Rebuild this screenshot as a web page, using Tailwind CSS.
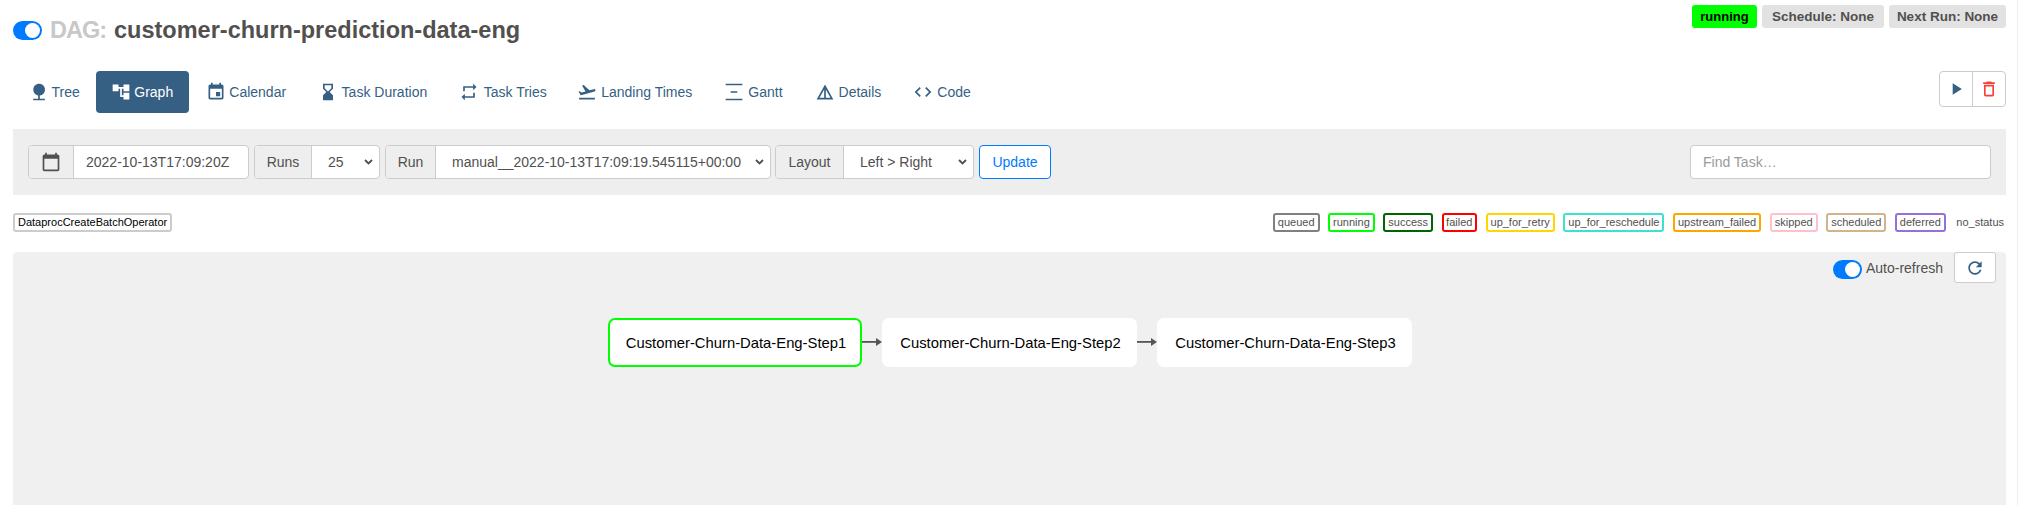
<!DOCTYPE html>
<html lang="en">

<head>
    <meta charset="UTF-8">
    <title>DAG: customer-churn-prediction-data-eng</title>
    <script src="https://cdn.jsdelivr.net/npm/@tailwindcss/browser@4"></script>
</head>

<body class="bg-white font-['Liberation_Sans',sans-serif] text-[#51504f] overflow-hidden">
    <div class="h-[505px] w-[2018px] border-r border-[#eeeeee] pl-[13px] pr-[11px]">
        <!-- header -->
        <div class="relative h-[58px]">
            <h4 class="flex items-center pt-[15px] text-[23.500px] leading-[30px] font-bold">
                <span class="relative mr-[8px] h-[19px] w-[29px] rounded-full bg-[#007bff]">
                    <span class="absolute right-[2px] top-[2px] h-[15px] w-[15px] rounded-full bg-white"></span>
                </span>
                <span class="mr-[8px] tracking-[-1px] text-[#c8c8c8]">DAG:</span>
                <span>customer-churn-prediction-data-eng</span>
            </h4>
            <div class="absolute right-0 top-[5px] flex gap-[5px] text-center text-[13.5px] font-bold leading-[23px]">
                <span class="w-[65px] rounded-[3px] bg-[#00ff00] text-[13px] text-black">running</span>
                <span class="w-[122px] rounded-[3px] bg-[#e2e2e2]">Schedule: None</span>
                <span class="w-[117px] rounded-[3px] bg-[#e2e2e2]">Next Run: None</span>
            </div>
        </div>

        <!-- tabs -->
        <div class="flex h-[71px] items-start justify-between pt-[13px] text-[14px] text-[#365f84]">
            <nav class="flex">
                <a class="flex h-[42px] items-center gap-[3px] pl-[15.500px] pr-[16.500px]">
                    <svg class="h-[20px] w-[20px]" viewBox="0 0 24 24" fill="#365f84"><path d="M13 16.120c3.470-.410 6.170-3.360 6.170-6.950 0-3.870-3.130-7-7-7s-7 3.130-7 7c0 3.470 2.520 6.340 5.830 6.890V20H5v2h14v-2h-6v-3.880z"/></svg>Tree</a>
                <a class="flex h-[42px] w-[93px] items-center gap-[3px] rounded-[4px] bg-[#365f84] pl-[15px] text-white">
                    <svg class="h-[20px] w-[20px]" viewBox="0 0 24 24" fill="white"><path d="M22 11V3h-7v3H9V3H2v8h7V8h2v10h4v3h7v-8h-7v3h-2V8h2v3z"/></svg>Graph</a>
                <a class="flex h-[42px] items-center gap-[3.500px] pl-[16.500px] pr-[16.500px]">
                    <svg class="h-[20px] w-[20px]" viewBox="0 0 24 24" fill="#365f84"><path d="M17 12h-5v5h5v-5zM16 1v2H8V1H6v2H5c-1.110 0-1.990.9-1.990 2L3 19c0 1.100.89 2 2 2h14c1.100 0 2-.9 2-2V5c0-1.100-.9-2-2-2h-1V1h-2zm3 18H5V8h14v11z"/></svg>Calendar</a>
                <a class="flex h-[42px] items-center gap-[3.500px] px-[15.500px]">
                    <svg class="h-[20px] w-[20px]" viewBox="0 0 24 24" fill="#365f84"><path fill-rule="evenodd" d="M18 22l-.01-6L14 12l3.990-4.010L18 2H6v6l4 4-4 3.990V22h12zM8 7.500V4h8v3.500l-4 4-4-4z"/></svg>Task Duration</a>
                <a class="flex h-[42px] items-center gap-[5px] pl-[16px] pr-[14.500px]">
                    <svg class="h-[20px] w-[20px]" viewBox="0 0 24 24" fill="#365f84"><path d="M7 7h10v3l4-4-4-4v3H5v6h2V7zm10 10H7v-3l-4 4 4 4v-3h12v-6h-2v4z"/></svg>Task Tries</a>
                <a class="flex h-[42px] items-center gap-[4px] px-[16px]">
                    <svg class="h-[20px] w-[20px]" viewBox="0 0 24 24" fill="#365f84"><path d="M2.500 19h19v2h-19v-2zm19.570-9.360c-.21-.8-1.040-1.280-1.840-1.060L14.920 10l-6.900-6.430-1.930.51 4.140 7.170-4.970 1.330-1.970-1.540-1.450.39 1.820 3.160.77 1.330 1.600-.43 5.310-1.420 4.350-1.160L21 11.490c.81-.23 1.280-1.050 1.070-1.850z"/></svg>Landing Times</a>
                <a class="flex h-[42px] items-center gap-[4px] px-[16px]">
                    <svg class="h-[20px] w-[20px]" viewBox="0 0 24 24" fill="#365f84"><path d="M2 22h20v-2H2v2zM2 2v2h20V2H2zm6 9v2h8v-2H8z"/></svg>Gantt</a>
                <a class="flex h-[42px] items-center gap-[4px] px-[16px]">
                    <svg class="h-[20px] w-[20px]" viewBox="0 0 24 24" fill="#365f84"><path d="M12 3L2 21h20L12 3zm1 5.920L18.600 19H13V8.920zm-2 0V19H5.400L11 8.920z"/></svg>Details</a>
                <a class="flex h-[42px] items-center gap-[4px] px-[16px]">
                    <svg class="h-[20px] w-[20px]" viewBox="0 0 24 24" fill="#365f84"><path d="M9.400 16.600L4.800 12l4.600-4.600L8 6l-6 6 6 6 1.400-1.400zm5.200 0l4.600-4.600-4.600-4.600L16 6l6 6-6 6-1.400-1.400z"/></svg>Code</a>
            </nav>
            <div class="flex h-[36px] w-[67px] rounded-[4px] border border-[#cccccc]">
                <button class="flex flex-1 items-center justify-center border-r border-[#cccccc]">
                    <svg class="h-[20px] w-[20px]" viewBox="0 0 24 24" fill="#365f84"><path d="M8 5v14l11-7z"/></svg>
                </button>
                <button class="flex flex-1 items-center justify-center">
                    <svg class="h-[20px] w-[20px]" viewBox="0 0 24 24" fill="#f44336"><path d="M6 19c0 1.100.9 2 2 2h8c1.100 0 2-.9 2-2V7H6v12zM8 9h8v10H8V9zm7.500-5l-1-1h-5l-1 1H5v2h14V4z"/></svg>
                </button>
            </div>
        </div>

        <!-- filter bar -->
        <div class="flex h-[66px] items-center justify-between bg-[#eeeeee] px-[15px] text-[14px]">
            <div class="flex gap-[5px]">
                <div class="flex h-[34px] w-[221px] overflow-hidden rounded-[4px] border border-[#cccccc] bg-white">
                    <span class="flex w-[45px] items-center justify-center border-r border-[#cccccc] bg-[#eeeeee]">
                        <svg class="h-[20px] w-[20px]" viewBox="0 0 24 24" fill="#51504f"><path d="M20 3h-1V1h-2v2H7V1H5v2H4c-1.100 0-2 .9-2 2v16c0 1.100.9 2 2 2h16c1.100 0 2-.9 2-2V5c0-1.100-.9-2-2-2zm0 18H4V8h16v13z"/></svg>
                    </span>
                    <span class="flex flex-1 items-center pl-[12px]">2022-10-13T17:09:20Z</span>
                </div>
                <div class="flex h-[34px] w-[126px] overflow-hidden rounded-[4px] border border-[#cccccc] bg-white">
                    <span class="flex w-[57px] items-center justify-center border-r border-[#cccccc] bg-[#eeeeee]">Runs</span>
                    <span class="flex flex-1 items-center justify-between pl-[16px] pr-[6px]">25
                        <svg class="h-[6px] w-[9px]" viewBox="0 0 9 6" fill="none" stroke="#51504f" stroke-width="1.800"><path d="M1 1l3.500 3.500L8 1"/></svg></span>
                </div>
                <div class="flex h-[34px] w-[386px] overflow-hidden rounded-[4px] border border-[#cccccc] bg-white">
                    <span class="flex w-[50px] items-center justify-center border-r border-[#cccccc] bg-[#eeeeee]">Run</span>
                    <span class="flex flex-1 items-center justify-between pl-[16px] pr-[6px]">manual__2022-10-13T17:09:19.545115+00:00
                        <svg class="h-[6px] w-[9px]" viewBox="0 0 9 6" fill="none" stroke="#51504f" stroke-width="1.800"><path d="M1 1l3.500 3.500L8 1"/></svg></span>
                </div>
                <div class="-ml-[1px] flex h-[34px] w-[199px] overflow-hidden rounded-[4px] border border-[#cccccc] bg-white">
                    <span class="flex w-[68px] items-center justify-center border-r border-[#cccccc] bg-[#eeeeee]">Layout</span>
                    <span class="flex flex-1 items-center justify-between pl-[16px] pr-[6px]">Left &gt; Right
                        <svg class="h-[6px] w-[9px]" viewBox="0 0 9 6" fill="none" stroke="#51504f" stroke-width="1.800"><path d="M1 1l3.500 3.500L8 1"/></svg></span>
                </div>
                <button class="h-[34px] w-[72px] rounded-[4px] border border-[#007bff] bg-white text-[#007bff]">Update</button>
            </div>
            <div class="flex h-[34px] w-[301px] items-center rounded-[4px] border border-[#cccccc] bg-white pl-[12px] text-[#9a9a9a]">Find Task…</div>
        </div>

        <!-- legend -->
        <div class="flex h-[57px] items-start justify-between pt-[18px] text-[11px] leading-[15px]">
            <span class="rounded-[3px] border-2 border-[#cccccc] px-[3px] text-black">DataprocCreateBatchOperator</span>
            <div class="flex gap-[8.500px] pr-[2px]">
                <span class="rounded-[3px] border-2 border-[#808080] px-[3px]">queued</span>
                <span class="rounded-[3px] border-2 border-[#00ff00] px-[3px]">running</span>
                <span class="rounded-[3px] border-2 border-[#006400] px-[3px]">success</span>
                <span class="w-[35.500px] rounded-[3px] border-2 border-[#ff0000] text-center">failed</span>
                <span class="rounded-[3px] border-2 border-[#ffd700] px-[3px]">up_for_retry</span>
                <span class="rounded-[3px] border-2 border-[#40e0d0] px-[3px]">up_for_reschedule</span>
                <span class="rounded-[3px] border-2 border-[#ffa500] px-[3px]">upstream_failed</span>
                <span class="rounded-[3px] border-2 border-[#ffc0cb] px-[3px]">skipped</span>
                <span class="rounded-[3px] border-2 border-[#d2b48c] px-[3px]">scheduled</span>
                <span class="rounded-[3px] border-2 border-[#9370db] px-[3px]">deferred</span>
                <span class="py-[2px] pl-[2px]">no_status</span>
            </div>
        </div>

        <!-- graph -->
        <div class="relative h-[253px] rounded-t-[4px] bg-[#f0f0f0]">
            <div class="absolute right-[10px] top-0 flex items-start text-[14px]">
                <span class="relative mt-[8px] h-[19px] w-[29px] rounded-full bg-[#007bff]">
                    <span class="absolute right-[2px] top-[2px] h-[15px] w-[15px] rounded-full bg-white"></span>
                </span>
                <span class="ml-[4px] mr-[11px] mt-[7px] leading-[18px]">Auto-refresh</span>
                <button class="flex h-[31px] w-[42px] items-center justify-center rounded-[3px] border border-[#cccccc] bg-white">
                    <svg class="h-[20px] w-[20px]" viewBox="0 0 24 24" fill="#365f84"><path d="M17.650 6.350C16.200 4.900 14.210 4 12 4c-4.420 0-7.990 3.580-7.990 8s3.570 8 7.990 8c3.730 0 6.840-2.550 7.730-6h-2.080c-.82 2.330-3.040 4-5.650 4-3.310 0-6-2.690-6-6s2.690-6 6-6c1.660 0 3.140.69 4.220 1.780L13 11h7V4l-2.350 2.350z"/></svg>
                </button>
            </div>
            <div class="flex pl-[595px] pt-[66px] text-[14.800px] text-black">
                <div class="flex h-[49px] w-[254px] items-center justify-center rounded-[7px] border-2 border-[#00ff00] bg-white pl-[2px] pt-[2px]">Customer-Churn-Data-Eng-Step1</div>
                <svg class="mt-[18px] h-[12px] w-[20px]" viewBox="0 0 20 12" fill="#555555"><rect x="0" y="5" width="15" height="1.800"/><path d="M14 2l6 4-6 4z"/></svg>
                <div class="flex h-[49px] w-[255px] items-center justify-center rounded-[7px] bg-white pl-[2px] pt-[2px]">Customer-Churn-Data-Eng-Step2</div>
                <svg class="mt-[18px] h-[12px] w-[20px]" viewBox="0 0 20 12" fill="#555555"><rect x="0" y="5" width="15" height="1.800"/><path d="M14 2l6 4-6 4z"/></svg>
                <div class="flex h-[49px] w-[255px] items-center justify-center rounded-[7px] bg-white pl-[2px] pt-[2px]">Customer-Churn-Data-Eng-Step3</div>
            </div>
        </div>
    </div>
</body>

</html>
